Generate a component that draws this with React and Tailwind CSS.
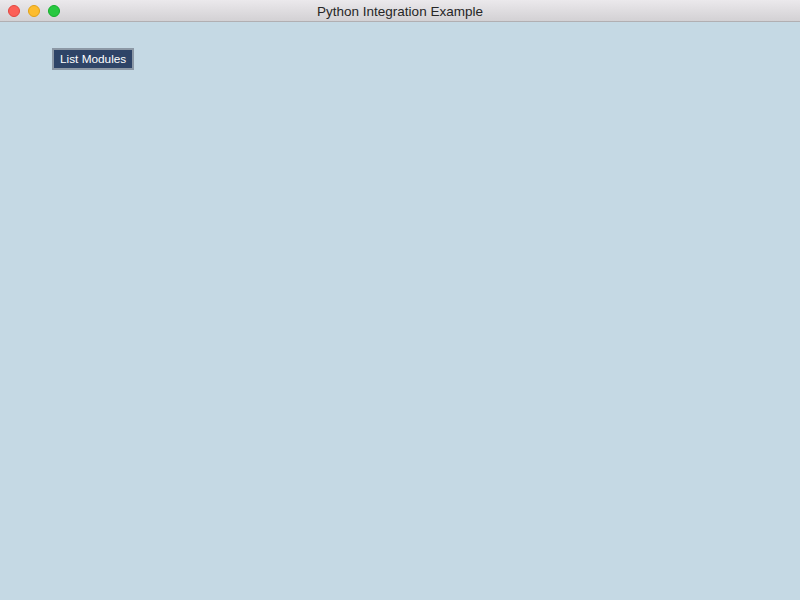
import React from 'react';

const App = () => {
  return (
    <div className="w-[800px] h-[600px] flex flex-col bg-[#c5d9e4] overflow-hidden" style={{ fontFamily: '"Helvetica Neue", "Liberation Sans", Arial, sans-serif' }}>
      {/* Title bar */}
      <div className="relative h-[22px] shrink-0 flex items-center justify-center bg-gradient-to-b from-[#ebe9ec] to-[#d3d1d4] border-b border-[#b1afb2]">
        <div className="absolute left-[8px] top-[5px] flex gap-[8px]">
          <span className="w-[12px] h-[12px] rounded-full bg-[#fc5f57] border border-[#e2463f]" />
          <span className="w-[12px] h-[12px] rounded-full bg-[#fdbc2e] border border-[#e1a116]" />
          <span className="w-[12px] h-[12px] rounded-full bg-[#28c840] border border-[#14ae2b]" />
        </div>
        <span className="text-[13.5px] text-[#262626] leading-none pt-[2px]">Python Integration Example</span>
      </div>

      {/* Content */}
      <div className="flex-1 flex items-start pt-[26px] pl-[52px]">
        <button className="h-[22px] px-[6px] pt-[2px] bg-[#2e4467] border-2 border-[#8c98a5] text-white text-[11.8px] leading-none">
          List Modules
        </button>
      </div>
    </div>
  );
};

export default App;
